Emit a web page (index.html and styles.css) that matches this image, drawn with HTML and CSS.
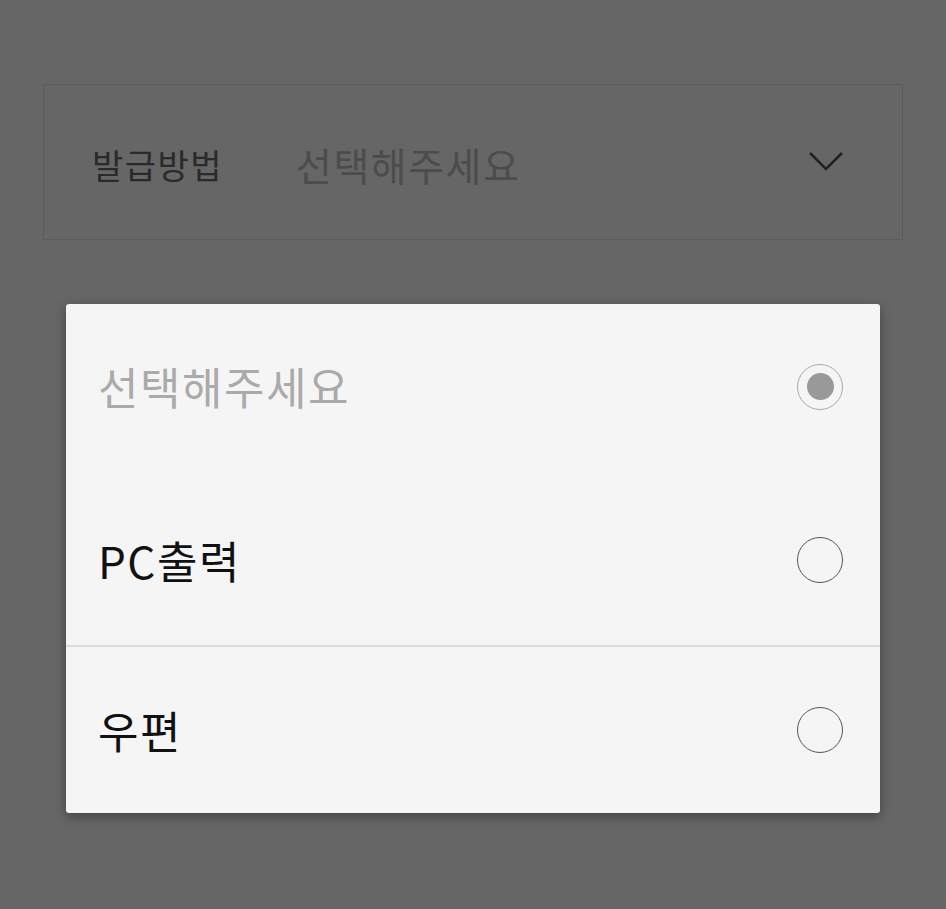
FILE: index.html
```html
<!DOCTYPE html>
<html lang="ko">
<head>
    <meta charset="UTF-8">
    <meta name="viewport" content="width=device-width, initial-scale=1.0">
    <title>발급방법 선택</title>
    <link rel="stylesheet" href="styles.css">
</head>
<body>
    <div class="page">
        <div class="select-box">
            <span class="select-label">발급방법</span>
            <span class="select-value">선택해주세요</span>
            <svg class="chevron" width="36" height="20" viewBox="0 0 36 20">
                <path d="M2 2 L18 18 L34 2" fill="none" stroke="#555" stroke-width="2.6" stroke-linejoin="miter"/>
            </svg>
        </div>
    </div>

    <!-- 선택 다이얼로그 -->
    <div class="backdrop">
        <div class="dialog">
            <div class="option placeholder">
                <span>선택해주세요</span>
                <span class="radio checked"></span>
            </div>
            <div class="option">
                <span>PC출력</span>
                <span class="radio"></span>
            </div>
            <div class="option divided">
                <span>우편</span>
                <span class="radio"></span>
            </div>
        </div>
    </div>
</body>
</html>
```

FILE: styles.css
```css
body {
    margin: 0;
    font-family: "Noto Sans CJK KR", "Noto Sans", sans-serif;
    background-color: #fff;
    height: 909px;
    overflow: hidden;
}
.page {
    padding: 84px 43px 0 43px;
}
.select-box {
    display: flex;
    align-items: center;
    height: 154px;
    border: 1px solid #e4e4e4;
    padding: 0 58px 0 48px;
}
.select-label {
    font-size: 34px;
    letter-spacing: 1.5px;
    color: #6a6a6a;
    width: 204px;
    margin-top: 4px;
}
.select-value {
    font-size: 39px;
    letter-spacing: 1.5px;
    color: #bdbdbd;
    flex: 1;
    margin-top: 4px;
}
.chevron {
    margin-top: -2px;
}
.backdrop {
    position: absolute;
    top: 0;
    left: 0;
    width: 100%;
    height: 100%;
    background-color: rgba(0, 0, 0, 0.6);
}
.dialog {
    position: absolute;
    top: 304px;
    left: 66px;
    width: 814px;
    background-color: #f5f5f5;
    border-radius: 3px;
    box-shadow: 0 4px 12px rgba(0, 0, 0, 0.35);
}
.option {
    display: flex;
    align-items: center;
    justify-content: space-between;
    height: 170px;
    padding: 0 37px 0 32px;
    font-size: 44px;
    letter-spacing: 1.5px;
    color: #111;
}
.option.placeholder {
    height: 171px;
    color: #aaa;
}
.option.placeholder span:first-child {
    margin-top: -8px;
}
.option.divided {
    border-top: 2px solid #dcdcdc;
    height: 166px;
}
.radio {
    width: 46px;
    height: 46px;
    border: 1.5px solid #555;
    border-radius: 50%;
    box-sizing: border-box;
    display: flex;
    align-items: center;
    justify-content: center;
}
.radio.checked {
    border-color: #aaa;
    margin-top: -6px;
}
.radio.checked::after {
    content: "";
    width: 27px;
    height: 27px;
    border-radius: 50%;
    background-color: #999;
}
```
